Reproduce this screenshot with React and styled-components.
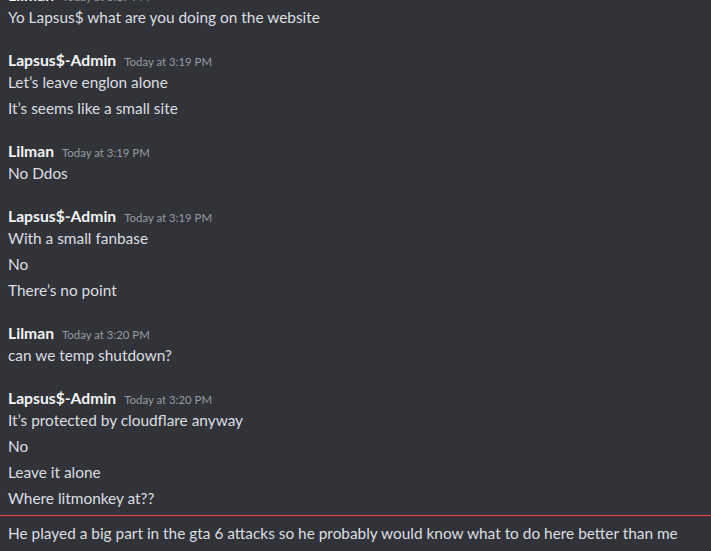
import React from "react";
import styled, { createGlobalStyle } from "styled-components";

const GlobalStyle = createGlobalStyle`
  html {
    background: #313338;
    overflow: hidden;
  }
  body {
    margin: 0;
    font-family: Lato, "Noto Sans", sans-serif;
  }
`;

const groups = [
  { author: "Lilman", time: "Today at 3:19 PM", lines: ["Yo Lapsus$ what are you doing on the website"] },
  { author: "Lapsus$-Admin", time: "Today at 3:19 PM", lines: ["Let’s leave englon alone", "It’s seems like a small site"] },
  { author: "Lilman", time: "Today at 3:19 PM", lines: ["No Ddos"] },
  { author: "Lapsus$-Admin", time: "Today at 3:19 PM", lines: ["With a small fanbase", "No", "There’s no point"] },
  { author: "Lilman", time: "Today at 3:20 PM", lines: ["can we temp shutdown?"] },
  {
    author: "Lapsus$-Admin",
    time: "Today at 3:20 PM",
    lines: ["It’s protected by cloudflare anyway", "No", "Leave it alone", "Where litmonkey at??"],
  },
];

const App = () => {
  return (
    <>
      <GlobalStyle />
      <Chat>
        {groups.map((group, idx) => (
          <Group key={idx} $first={idx === 0}>
            <Header>
              <Author>{group.author}</Author>
              <Timestamp>{group.time}</Timestamp>
            </Header>
            {group.lines.map((line, i) => (
              <Message key={i} $lead={i === 0}>{line}</Message>
            ))}
          </Group>
        ))}
        <NewDivider />
        <Message>
          He played a big part in the gta 6 attacks so he probably would know what to do here better than me
        </Message>
      </Chat>
    </>
  );
};

const Chat = styled.div`
  margin-top: -18px;
  padding-left: 8px;
`;

const Group = styled.div`
  margin-top: ${(p) => (p.$first ? "0" : "17px")};
`;

const Header = styled.div`
  display: flex;
  align-items: baseline;
  gap: 8px;
  height: 22px;
  padding-top: 2px;
`;

const Author = styled.span`
  font-size: 15.7px;
  line-height: 22px;
  font-weight: 700;
  color: #f2f3f5;
`;

const Timestamp = styled.span`
  font-size: 11.4px;
  line-height: 22px;
  color: #949ba4;
`;

const Message = styled.div`
  font-size: 15.4px;
  line-height: 22px;
  color: #dbdee1;
  white-space: nowrap;
  padding: ${(p) => (p.$lead ? "0 0 2px" : "2px 0")};
`;

const NewDivider = styled.div`
  height: 0;
  border-top: 1px solid #f23f43;
  margin: 4px 0 4px -8px;
`;

export default App;
